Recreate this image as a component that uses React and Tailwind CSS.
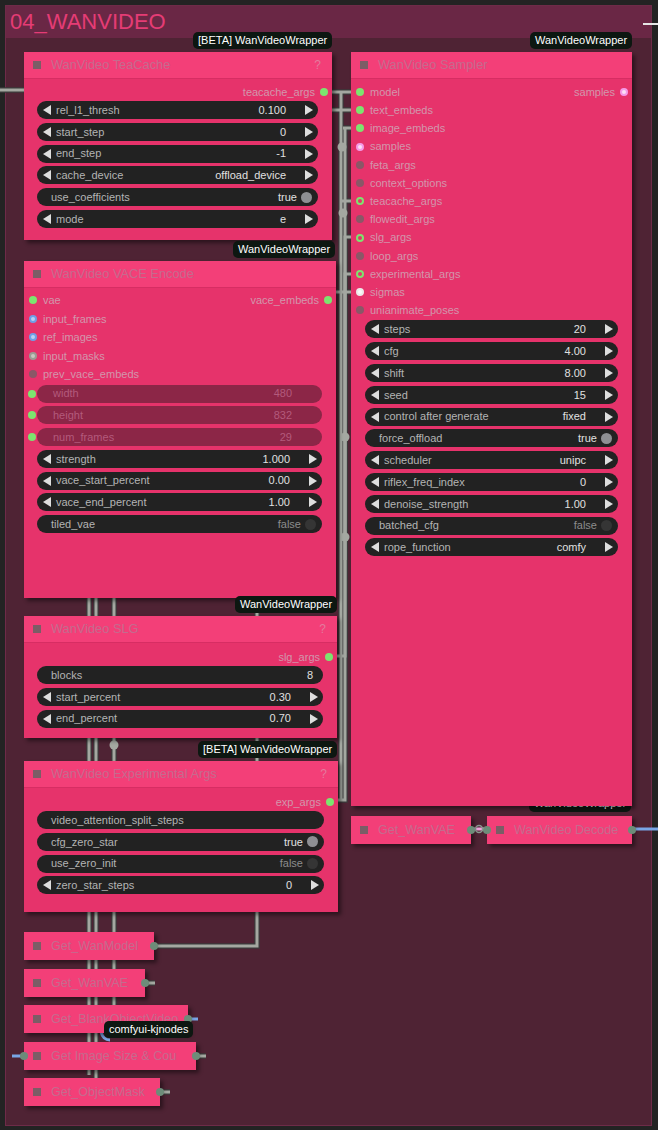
import React from 'react';

// slot colours used by the node graph
const DOTS = {
  green: 'bg-[#7de46f]',
  greenRing: 'border-2 border-[#7de46f] bg-[#e6336b]',
  pinkRing: 'border-2 border-[#f59ae8] bg-[#fbe0f6]',
  blueRing: 'border-2 border-[#6f9fe6] bg-[#b9d0f3]',
  whiteRing: 'border-2 border-[#ecebea] bg-[#fbf8f9]',
  greyRing: 'border-2 border-[#9b9b93] bg-[#c6c6bf]',
  off: 'bg-[#8a5767]',
};

function Dot({ kind = 'green' }) {
  return <span className={`block h-[8px] w-[8px] shrink-0 rounded-full ${DOTS[kind]}`} />;
}

function Arrow({ dir }) {
  return (
    <svg width="8" height="10" viewBox="0 0 8 10" className="shrink-0">
      <path d={dir === 'l' ? 'M8 0L0 5L8 10Z' : 'M0 0L8 5L0 10Z'} fill="#dedede" />
    </svg>
  );
}

function Num({ label, value }) {
  return (
    <div className="flex h-[18px] items-center rounded-full bg-[#222222] pl-[6px] pr-[5px] text-[11px]">
      <Arrow dir="l" />
      <span className="ml-[5px] text-[#b4b4b4]">{label}</span>
      <span className="ml-auto mr-[19px] text-[#e0e0e0]">{value}</span>
      <Arrow dir="r" />
    </div>
  );
}

function Toggle({ label, on }) {
  return (
    <div className="flex h-[18px] items-center rounded-full bg-[#222222] pl-[14px] pr-[6px] text-[11px]">
      <span className="text-[#b4b4b4]">{label}</span>
      <span className={`ml-auto mr-[4px] ${on ? 'text-[#e0e0e0]' : 'text-[#8c8c8c]'}`}>{on ? 'true' : 'false'}</span>
      <span className={`h-[11px] w-[11px] rounded-full ${on ? 'bg-[#8e8f93]' : 'bg-[#353535]'}`} />
    </div>
  );
}

function Plain({ label, value }) {
  return (
    <div className="flex h-[18px] items-center rounded-full bg-[#222222] pl-[14px] pr-[10px] text-[11px]">
      <span className="text-[#b4b4b4]">{label}</span>
      {value && <span className="ml-auto text-[#e0e0e0]">{value}</span>}
    </div>
  );
}

function Linked({ label, value }) {
  return (
    <div className="relative flex h-[18px] items-center rounded-full bg-[#8c2647] pl-[16px] pr-[30px] text-[11px]">
      <span className="absolute left-[-9px] top-[5px] h-[8px] w-[8px] rounded-full bg-[#7de46f]" />
      <span className="text-[#b35a7c]">{label}</span>
      <span className="ml-auto text-[#b35a7c]">{value}</span>
    </div>
  );
}

function InRow({ label, dot, out, outDot }) {
  return (
    <div className="flex h-[18.2px] items-center pl-[5px] pr-[4px] text-[11px]">
      <Dot kind={dot} />
      <span className="ml-[6px] text-[#d296ab]">{label}</span>
      {out && (
        <>
          <span className="ml-auto mr-[5px] text-[#d296ab]">{out}</span>
          <Dot kind={outDot} />
        </>
      )}
    </div>
  );
}

function OutRow({ label }) {
  return (
    <div className="flex h-[18px] items-center justify-end pr-[4px] text-[11px]">
      <span className="mr-[5px] text-[#d296ab]">{label}</span>
      <Dot kind="green" />
    </div>
  );
}

function Title({ text, help }) {
  return (
    <div className="flex h-[27px] shrink-0 items-center border-b border-[#d72d63] bg-[#f33f78] pl-[9px] pr-[11px]">
      <span className="h-[8px] w-[8px] bg-[#7b5d66]" />
      <span className="ml-[10px] text-[12.8px] text-[#c56b8e]">{text}</span>
      {help && <span className="ml-auto text-[12px] text-[#e47a9d]">?</span>}
    </div>
  );
}

function Badge({ text, className }) {
  return (
    <div className={`absolute flex h-[17px] items-center rounded-[5px] bg-[#0d1711] px-[5px] text-[11px] text-white ${className}`}>
      {text}
    </div>
  );
}

function Collapsed({ title, className, children }) {
  return (
    <div className={`absolute flex h-[28px] items-center bg-[#f33f78] pl-[9px] shadow-[3px_3px_4px_rgba(0,0,0,0.45)] ${className}`}>
      <span className="h-[8px] w-[8px] bg-[#7b5d66]" />
      <span className="ml-[10px] whitespace-nowrap text-[12.6px] text-[#c56b8e]">{title}</span>
      {children}
    </div>
  );
}

function OutStub() {
  return <span className="absolute right-[-4px] top-[10px] h-[8px] w-[8px] rounded-full bg-[#6d8c79]" />;
}

function Wires() {
  const grey = '#a4a8a1';
  const edge = '#3b3b3b';
  const links = [
    'M0 90H24',
    'M330 92H358',
    'M332 110H358',
    'M343 128H358',
    'M341 92V800',
    'M341 201H358',
    'M345 128V560',
    'M332 656H345V237H358',
    'M332 800H345V274H358',
    'M336 292H358',
    'M89 590V1075',
    'M96 590V1080',
    'M114 590V1030',
    'M257 590V946H154',
    'M145 983H155',
    'M196 1056H206',
    'M160 1092H170',
  ];
  return (
    <svg className="absolute left-0 top-0" width="658" height="1130">
      {links.map((d) => (
        <path key={d + 'e'} d={d} stroke={edge} strokeWidth="5.5" fill="none" />
      ))}
      {links.map((d) => (
        <path key={d} d={d} stroke={grey} strokeWidth="3" fill="none" />
      ))}
      {[[342, 147], [343, 213], [345, 437], [345, 537], [114, 745]].map(([cx, cy]) => (
        <circle key={cx + '-' + cy} cx={cx} cy={cy} r="4.5" fill={grey} />
      ))}
      <path d="M643 24H658" stroke="#e6e6e6" strokeWidth="2" />
      <path d="M632 829H658" stroke="#79a6e6" strokeWidth="3" />
      <path d="M188 1019H198" stroke="#79a6e6" strokeWidth="3" />
      <path d="M12 1056H24" stroke="#79a6e6" strokeWidth="3" />
      <path d="M101 1032Q103 1040 110 1040" stroke="#79a6e6" strokeWidth="3" fill="none" />
      <path d="M471 829H487" stroke="#f1a3dc" strokeWidth="3" />
      <circle cx="479" cy="829" r="3.5" fill="none" stroke="#8a9a90" strokeWidth="1.5" />
    </svg>
  );
}

export default function App() {
  return (
    <div className="relative h-[1130px] w-[658px] overflow-hidden bg-[#232323] font-['Liberation_Sans',Arial,sans-serif]">
      {/* group frame */}
      <div className="absolute left-[5px] top-[5px] flex h-[1121px] w-[647px] flex-col border border-[#6e2b48] bg-[#4f2334]">
        <div className="flex h-[32px] shrink-0 items-center bg-[#6a2745] pl-[4px] text-[22px] leading-none text-[#e53c75]">
          04_WANVIDEO
        </div>
      </div>

      <Wires />

      {/* TeaCache */}
      <Badge text="[BETA] WanVideoWrapper" className="left-[193px] top-[32px]" />
      <div className="absolute left-[24px] top-[52px] flex h-[188px] w-[308px] flex-col bg-[#e6336b] shadow-[3px_3px_4px_rgba(0,0,0,0.45)]">
        <Title text="WanVideo TeaCache" help />
        <div className="flex flex-col pt-[4px]">
          <OutRow label="teacache_args" />
          <div className="flex flex-col gap-[3.8px] pl-[13px] pr-[14px]">
            <Num label="rel_l1_thresh" value="0.100" />
            <Num label="start_step" value="0" />
            <Num label="end_step" value="-1" />
            <Num label="cache_device" value="offload_device" />
            <Toggle label="use_coefficients" on />
            <Num label="mode" value="e" />
          </div>
        </div>
      </div>

      {/* VACE encode */}
      <Badge text="WanVideoWrapper" className="left-[233px] top-[241px]" />
      <div className="absolute left-[24px] top-[261px] flex h-[337px] w-[312px] flex-col bg-[#e6336b] shadow-[3px_3px_4px_rgba(0,0,0,0.45)]">
        <Title text="WanVideo VACE Encode" />
        <div className="flex flex-col pt-[3px]">
          <div className="flex h-[18.5px] items-center pl-[5px] pr-[4px] text-[11px]">
            <Dot kind="green" />
            <span className="ml-[6px] text-[#d296ab]">vae</span>
            <span className="ml-auto mr-[5px] text-[#d296ab]">vace_embeds</span>
            <Dot kind="green" />
          </div>
          {[
            ['input_frames', 'blueRing'],
            ['ref_images', 'blueRing'],
            ['input_masks', 'greyRing'],
            ['prev_vace_embeds', 'off'],
          ].map(([l, k]) => (
            <div key={l} className="flex h-[18.5px] items-center pl-[5px] text-[11px]">
              <Dot kind={k} />
              <span className="ml-[6px] text-[#d296ab]">{l}</span>
            </div>
          ))}
          <div className="mt-[1px] flex flex-col gap-[3.8px] pl-[13px] pr-[14px]">
            <Linked label="width" value="480" />
            <Linked label="height" value="832" />
            <Linked label="num_frames" value="29" />
            <Num label="strength" value="1.000" />
            <Num label="vace_start_percent" value="0.00" />
            <Num label="vace_end_percent" value="1.00" />
            <Toggle label="tiled_vae" />
          </div>
        </div>
      </div>

      {/* SLG */}
      <Badge text="WanVideoWrapper" className="left-[235px] top-[596px]" />
      <div className="absolute left-[24px] top-[616px] flex h-[122px] w-[313px] flex-col bg-[#e6336b] shadow-[3px_3px_4px_rgba(0,0,0,0.45)]">
        <Title text="WanVideo SLG" help />
        <div className="flex flex-col pt-[5px]">
          <OutRow label="slg_args" />
          <div className="flex flex-col gap-[3.8px] pl-[13px] pr-[14px]">
            <Plain label="blocks" value="8" />
            <Num label="start_percent" value="0.30" />
            <Num label="end_percent" value="0.70" />
          </div>
        </div>
      </div>

      {/* Experimental args */}
      <Badge text="[BETA] WanVideoWrapper" className="left-[198px] top-[741px]" />
      <div className="absolute left-[24px] top-[761px] flex h-[151px] w-[314px] flex-col bg-[#e6336b] shadow-[3px_3px_4px_rgba(0,0,0,0.45)]">
        <Title text="WanVideo Experimental Args" help />
        <div className="flex flex-col pt-[5px]">
          <OutRow label="exp_args" />
          <div className="flex flex-col gap-[3.8px] pl-[13px] pr-[14px]">
            <Plain label="video_attention_split_steps" />
            <Toggle label="cfg_zero_star" on />
            <Toggle label="use_zero_init" />
            <Num label="zero_star_steps" value="0" />
          </div>
        </div>
      </div>

      {/* Decode badge sits under the sampler */}
      <Badge text="WanVideoWrapper" className="left-[529px] top-[795px]" />

      {/* Sampler */}
      <Badge text="WanVideoWrapper" className="left-[530px] top-[32px]" />
      <div className="absolute left-[351px] top-[52px] flex h-[754px] w-[281px] flex-col bg-[#e6336b] shadow-[3px_3px_4px_rgba(0,0,0,0.45)]">
        <Title text="WanVideo Sampler" />
        <div className="flex flex-col pt-[4px]">
          <InRow label="model" dot="green" out="samples" outDot="pinkRing" />
          <InRow label="text_embeds" dot="green" />
          <InRow label="image_embeds" dot="green" />
          <InRow label="samples" dot="pinkRing" />
          <InRow label="feta_args" dot="off" />
          <InRow label="context_options" dot="off" />
          <InRow label="teacache_args" dot="greenRing" />
          <InRow label="flowedit_args" dot="off" />
          <InRow label="slg_args" dot="greenRing" />
          <InRow label="loop_args" dot="off" />
          <InRow label="experimental_args" dot="greenRing" />
          <InRow label="sigmas" dot="whiteRing" />
          <InRow label="unianimate_poses" dot="off" />
          <div className="mt-[1px] flex flex-col gap-[3.8px] px-[14px]">
            <Num label="steps" value="20" />
            <Num label="cfg" value="4.00" />
            <Num label="shift" value="8.00" />
            <Num label="seed" value="15" />
            <Num label="control after generate" value="fixed" />
            <Toggle label="force_offload" on />
            <Num label="scheduler" value="unipc" />
            <Num label="riflex_freq_index" value="0" />
            <Num label="denoise_strength" value="1.00" />
            <Toggle label="batched_cfg" />
            <Num label="rope_function" value="comfy" />
          </div>
        </div>
      </div>

      <Collapsed title="Get_WanVAE" className="left-[351px] top-[816px] h-[27px] w-[120px]">
        <OutStub />
      </Collapsed>
      <Collapsed title="WanVideo Decode" className="left-[487px] top-[816px] h-[27px] w-[145px]">
        <span className="absolute left-[-4px] top-[10px] h-[8px] w-[8px] rounded-full bg-[#6d8c79]" />
        <OutStub />
      </Collapsed>

      {/* getter nodes */}
      <Collapsed title="Get_WanModel" className="left-[24px] top-[932px] w-[130px]">
        <OutStub />
      </Collapsed>
      <Collapsed title="Get_WanVAE" className="left-[24px] top-[969px] w-[121px]">
        <OutStub />
      </Collapsed>
      <Collapsed title="Get_BlankObjectVideo" className="left-[24px] top-[1005px] w-[164px] overflow-visible">
        <OutStub />
      </Collapsed>
      <Collapsed title="Get Image Size & Cou" className="left-[24px] top-[1042px] w-[172px]">
        <span className="absolute left-[-4px] top-[10px] h-[8px] w-[8px] rounded-full bg-[#6d8c79]" />
        <OutStub />
      </Collapsed>
      <Collapsed title="Get_ObjectMask" className="left-[24px] top-[1078px] w-[136px]">
        <OutStub />
      </Collapsed>

      <Badge text="comfyui-kjnodes" className="left-[104px] top-[1021px]" />
    </div>
  );
}
